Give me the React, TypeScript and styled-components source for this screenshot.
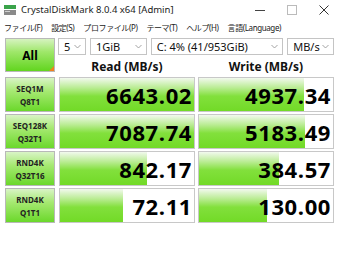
import React from "react";
import styled, { createGlobalStyle } from "styled-components";

const Global = createGlobalStyle`
  html, body { margin: 0; padding: 0; background: #ffffff; }
  body { font-family: "Noto Sans", "Open Sans", "Noto Sans CJK JP", sans-serif; color: #000; }
`;

const Window = styled.div`
  width: 340px;
  height: 275px;
  background: #ffffff;
  overflow: hidden;
`;

const TitleBar = styled.div`
  height: 19px;
  display: flex;
  align-items: center;
  padding-left: 4px;
  font-size: 9.5px;
  color: #1a1a1a;
`;

const AppIcon = styled.svg`
  width: 12px;
  height: 10px;
  margin-right: 5px;
  flex: none;
`;

const Title = styled.span`
  flex: 1;
  white-space: nowrap;
`;

const WinBtn = styled.div`
  width: 32px;
  display: flex;
  justify-content: center;
  align-items: center;
  color: #555;
`;

const MenuBar = styled.div`
  height: 16px;
  display: flex;
  align-items: center;
  gap: 9px;
  padding-left: 4px;
  font-size: 8px;
  letter-spacing: -0.4px;
  font-family: "Noto Sans", "Noto Sans CJK JP", sans-serif;
  color: #222;
  margin-bottom: 3px;
  white-space: nowrap;
`;

const Grid = styled.div`
  display: grid;
  grid-template-columns: 51px 136px 136px;
  grid-template-rows: 17px 18px;
  grid-auto-rows: 35px;
  column-gap: 3px;
  row-gap: 2px;
  padding-left: 5px;
`;

const AllButton = styled.div`
  grid-row: 1 / span 2;
  width: 50px;
  height: 34px;
  box-sizing: border-box;
  border: 1px solid #b8b8b8;
  position: relative;
  background: linear-gradient(#d6f3c0 0%, #9fe76a 40%, #62d51f 100%);
  display: flex;
  align-items: center;
  justify-content: center;
  font-weight: 700;
  font-size: 12px;
`;

const Corner = styled.div`
  position: absolute;
  right: 0;
  bottom: 0;
  width: 0;
  height: 0;
  border-left: 5px solid transparent;
  border-bottom: 5px solid #f08020;
`;

const ComboRow = styled.div`
  grid-column: 2 / span 2;
  display: flex;
  gap: 4px;
  margin-left: -1px;
`;

const Combo = styled.div<{ w: number }>`
  width: ${(p) => p.w}px;
  height: 17px;
  box-sizing: border-box;
  border: 1px solid #c4c4c4;
  background: #fff;
  display: flex;
  align-items: center;
  padding: 0 4px 0 5px;
  font-size: 11px;
  color: #111;
`;

const ComboText = styled.span`
  flex: 1;
  white-space: nowrap;
`;

const Chevron = styled.svg`
  width: 7px;
  height: 5px;
  flex: none;
`;

const Header = styled.div`
  font-weight: 700;
  font-size: 12px;
  text-align: center;
  line-height: 20px;
  color: #111;
`;

const Label = styled.div`
  width: 50px;
  height: 100%;
  box-sizing: border-box;
  border: 1px solid #b8b8b8;
  background: linear-gradient(#d9f4c6 0%, #a6e972 40%, #6bd82b 100%);
  display: flex;
  flex-direction: column;
  align-items: center;
  justify-content: center;
  font-weight: 700;
  font-size: 8px;
  line-height: 13px;
  color: #222;
`;

const Cell = styled.div`
  position: relative;
  height: 100%;
  box-sizing: border-box;
  border: 1px solid #c8c8c8;
  background: #fff;
  overflow: hidden;
`;

const Bar = styled.div`
  position: absolute;
  left: 0;
  top: 0;
  bottom: 0;
  background: linear-gradient(#f2f9ee 0%, #b9ec92 30%, #82e03c 55%, #72da27 100%);
`;

const Value = styled.div`
  position: relative;
  height: 100%;
  display: flex;
  align-items: center;
  justify-content: flex-end;
  padding-right: 2px;
  font-weight: 700;
  font-size: 22px;
  letter-spacing: 0.6px;
  font-family: "Open Sans", "Noto Sans", sans-serif;
`;

const ChevronIcon = () => (
  <Chevron viewBox="0 0 7 5">
    <path d="M0.5 1 L3.5 4 L6.5 1" fill="none" stroke="#999" strokeWidth="0.9" />
  </Chevron>
);

const rows = [
  { a: "SEQ1M", b: "Q8T1", r: "6643.02", rw: 100, w: "4937.34", ww: 78 },
  { a: "SEQ128K", b: "Q32T1", r: "7087.74", rw: 100, w: "5183.49", ww: 79 },
  { a: "RND4K", b: "Q32T16", r: "842.17", rw: 65, w: "384.57", ww: 60 },
  { a: "RND4K", b: "Q1T1", r: "72.11", rw: 47, w: "130.00", ww: 51 },
];

export default function App() {
  return (
    <Window>
      <Global />
      <TitleBar>
        <AppIcon viewBox="0 0 12 10">
          <rect x="0" y="0" width="12" height="4" fill="#3aa34a" />
          <rect x="0" y="5" width="12" height="5" fill="#8a8a8a" />
          <rect x="1" y="6" width="5" height="1" fill="#d0d0d0" />
        </AppIcon>
        <Title>CrystalDiskMark 8.0.4 x64 [Admin]</Title>
        <WinBtn>
          <svg width="10" height="10" viewBox="0 0 10 10">
            <path d="M0 5.5 H10" stroke="#444" strokeWidth="1" />
          </svg>
        </WinBtn>
        <WinBtn>
          <svg width="10" height="10" viewBox="0 0 10 10">
            <rect x="0.5" y="0.5" width="9" height="9" fill="none" stroke="#bbb" strokeWidth="1" />
          </svg>
        </WinBtn>
        <WinBtn>
          <svg width="10" height="10" viewBox="0 0 10 10">
            <path d="M0.5 0.5 L9.5 9.5 M9.5 0.5 L0.5 9.5" stroke="#333" strokeWidth="1" />
          </svg>
        </WinBtn>
      </TitleBar>
      <MenuBar>
        <span>ファイル(F)</span>
        <span>設定(S)</span>
        <span>プロファイル(P)</span>
        <span>テーマ(T)</span>
        <span>ヘルプ(H)</span>
        <span>言語(Language)</span>
      </MenuBar>
      <Grid>
        <AllButton>
          All
          <Corner />
        </AllButton>
        <ComboRow>
          <Combo w={28}>
            <ComboText>5</ComboText>
            <ChevronIcon />
          </Combo>
          <Combo w={57}>
            <ComboText>1GiB</ComboText>
            <ChevronIcon />
          </Combo>
          <Combo w={133}>
            <ComboText>C: 4% (41/953GiB)</ComboText>
            <ChevronIcon />
          </Combo>
          <Combo w={47}>
            <ComboText>MB/s</ComboText>
            <ChevronIcon />
          </Combo>
        </ComboRow>
        <Header>Read (MB/s)</Header>
        <Header>Write (MB/s)</Header>
        {rows.map((row, i) => (
          <React.Fragment key={i}>
            <Label>
              <span>{row.a}</span>
              <span>{row.b}</span>
            </Label>
            <Cell>
              <Bar style={{ width: `${row.rw}%` }} />
              <Value>{row.r}</Value>
            </Cell>
            <Cell>
              <Bar style={{ width: `${row.ww}%` }} />
              <Value>{row.w}</Value>
            </Cell>
          </React.Fragment>
        ))}
      </Grid>
    </Window>
  );
}
